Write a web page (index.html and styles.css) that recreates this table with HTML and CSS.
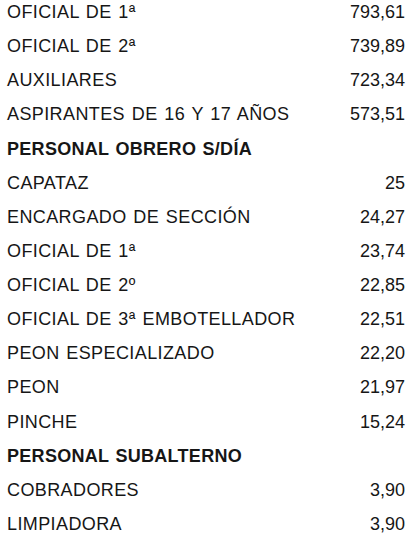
FILE: index.html
```html
<!DOCTYPE html>
<html lang="es">
<head>
<meta charset="utf-8">
<link rel="stylesheet" href="styles.css">
</head>
<body>
<div class="table">
  <div class="row"><span class="name">OFICIAL DE 1ª</span><span class="val">793,61</span></div>
  <div class="row"><span class="name">OFICIAL DE 2ª</span><span class="val">739,89</span></div>
  <div class="row"><span class="name">AUXILIARES</span><span class="val">723,34</span></div>
  <div class="row"><span class="name">ASPIRANTES DE 16 Y 17 AÑOS</span><span class="val">573,51</span></div>
  <div class="row head"><span class="name">PERSONAL OBRERO S/DÍA</span></div>
  <div class="row"><span class="name">CAPATAZ</span><span class="val">25</span></div>
  <div class="row"><span class="name">ENCARGADO DE SECCIÓN</span><span class="val">24,27</span></div>
  <div class="row"><span class="name">OFICIAL DE 1ª</span><span class="val">23,74</span></div>
  <div class="row"><span class="name">OFICIAL DE 2º</span><span class="val">22,85</span></div>
  <div class="row"><span class="name">OFICIAL DE 3ª EMBOTELLADOR</span><span class="val">22,51</span></div>
  <div class="row"><span class="name">PEON ESPECIALIZADO</span><span class="val">22,20</span></div>
  <div class="row"><span class="name">PEON</span><span class="val">21,97</span></div>
  <div class="row"><span class="name">PINCHE</span><span class="val">15,24</span></div>
  <div class="row head"><span class="name">PERSONAL SUBALTERNO</span></div>
  <div class="row"><span class="name">COBRADORES</span><span class="val">3,90</span></div>
  <div class="row"><span class="name">LIMPIADORA</span><span class="val">3,90</span></div>
</div>
</body>
</html>
```
FILE: styles.css
```css
html, body {
  margin: 0;
  padding: 0;
  background: #ffffff;
}
body {
  font-family: "Liberation Sans", Arial, sans-serif;
  color: #161616;
}
.table {
  display: flex;
  flex-direction: column;
  gap: 10.13px;
  padding: 0 8px 0 7px;
}
.row {
  display: flex;
  justify-content: space-between;
  font-size: 18px;
  line-height: 24px;
  height: 24px;
  letter-spacing: 0.4px;
  word-spacing: 1.3px;
}
.head {
  font-weight: bold;
  letter-spacing: 0.3px;
  word-spacing: 1px;
}
.val {
  letter-spacing: 0;
  word-spacing: 0;
}
```
